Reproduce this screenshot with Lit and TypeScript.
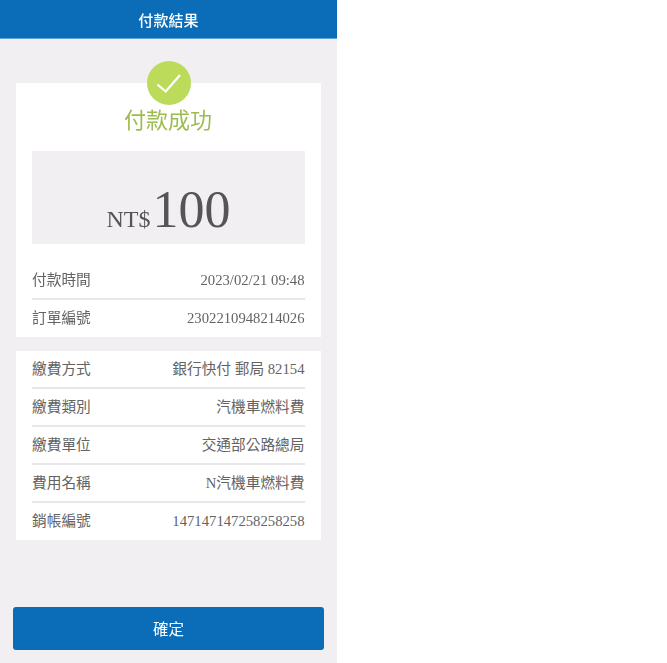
import { LitElement, html, css } from "lit";
import { customElement } from "lit/decorators.js";

const group1 = [
  ["付款時間", "2023/02/21 09:48"],
  ["訂單編號", "2302210948214026"],
];
const group2 = [
  ["繳費方式", "銀行快付 郵局 82154"],
  ["繳費類別", "汽機車燃料費"],
  ["繳費單位", "交通部公路總局"],
  ["費用名稱", "N汽機車燃料費"],
  ["銷帳編號", "147147147258258258"],
];

@customElement("app-root")
export class AppRoot extends LitElement {
  static styles = css`
    :host {
      display: block;
      width: 337px;
      height: 663px;
      background: #f1eff2;
      font-family: "Liberation Serif", "Noto Sans CJK TC", serif;
      color: #636363;
      overflow: hidden;
    }
    .page {
      display: flex;
      flex-direction: column;
      height: 100%;
      filter: blur(0.35px);
    }
    .header {
      height: 38px;
      flex: none;
      background: #0b6db8;
      border-bottom: 1px solid #5da3da;
      color: #fff;
      display: flex;
      align-items: center;
      justify-content: center;
      font-size: 15px;
      font-weight: 500;
      letter-spacing: 0.1px;
    }
    .main {
      flex: 1;
      display: flex;
      flex-direction: column;
      gap: 14px;
      padding: 44px 16px 0;
    }
    .card {
      background: #fff;
      padding: 0 16px;
      display: flex;
      flex-direction: column;
      position: relative;
    }
    .check {
      position: absolute;
      top: -22px;
      left: 50%;
      margin-left: -22px;
      width: 44px;
      height: 44px;
      display: block;
    }
    .title {
      margin-top: 22px;
      height: 32px;
      line-height: 32px;
      text-align: center;
      font-size: 22px;
      color: #9dbc52;
      padding-right: 1px;
    }
    .amount {
      margin: 14px 0 18px;
      height: 93px;
      box-sizing: border-box;
      background: #f1eff2;
      display: flex;
      align-items: baseline;
      justify-content: center;
      gap: 2px;
      line-height: 118px;
      color: #555;
    }
    .cur {
      font-size: 24px;
    }
    .num {
      font-size: 52px;
    }
    .row {
      height: 38px;
      box-sizing: border-box;
      display: flex;
      align-items: baseline;
      justify-content: space-between;
      font-size: 14.7px;
      line-height: 37px;
      padding-right: 0.5px;
      border-bottom: 2px solid #e8e7e9;
    }
    .row:last-child {
      height: 37px;
      border-bottom: 0;
    }
    .footer {
      flex: none;
      padding: 0 13px 13px;
    }
    .btn {
      display: block;
      width: 100%;
      height: 43px;
      border: 0;
      border-radius: 3px;
      background: #0b6db8;
      color: #fff;
      font: inherit;
      font-size: 15.5px;
      padding: 0 0 2px;
    }
  `;

  private rows(items: string[][]) {
    return items.map(
      ([k, v]) => html`<div class="row"><span>${k}</span><span>${v}</span></div>`
    );
  }

  render() {
    return html`
      <div class="page">
        <div class="header">付款結果</div>
        <div class="main">
          <div class="card">
            <svg class="check" viewBox="0 0 44 44" aria-hidden="true">
              <circle cx="22" cy="22" r="22" fill="#bcdb5a"></circle>
              <path d="M10.5 23.5 L18.7 30.5 L33 14" fill="none" stroke="#fff" stroke-width="2.3"></path>
            </svg>
            <div class="title">付款成功</div>
            <div class="amount"><span class="cur">NT$</span><span class="num">100</span></div>
            ${this.rows(group1)}
          </div>
          <div class="card">${this.rows(group2)}</div>
        </div>
        <div class="footer"><button class="btn">確定</button></div>
      </div>
    `;
  }
}
